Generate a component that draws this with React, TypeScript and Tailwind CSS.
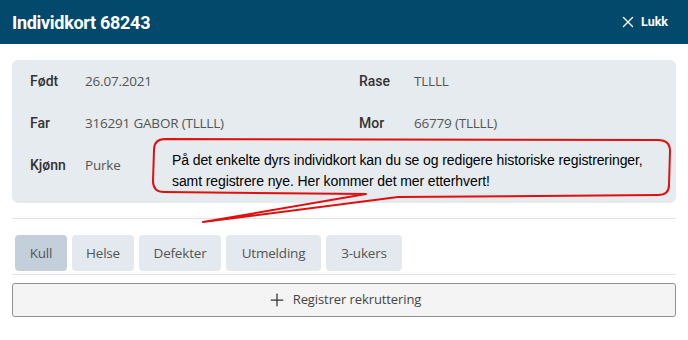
import { X, Plus } from "lucide-react";

const info = [
  [
    { label: "Født", value: "26.07.2021" },
    { label: "Rase", value: "TLLLL" },
  ],
  [
    { label: "Far", value: "316291 GABOR (TLLLL)" },
    { label: "Mor", value: "66779 (TLLLL)" },
  ],
  [{ label: "Kjønn", value: "Purke" }],
];

const tabs = [
  { name: "Kull", w: "w-[52px]" },
  { name: "Helse", w: "w-[62px]" },
  { name: "Defekter", w: "w-[82px]" },
  { name: "Utmelding", w: "w-[95px]" },
  { name: "3-ukers", w: "w-[76px]" },
];

export default function App() {
  return (
    <div className="relative w-[688px] h-[340px] bg-white overflow-hidden font-['Open_Sans',sans-serif]">
      {/* Topplinje */}
      <div className="h-[44px] bg-[#03496c] flex items-center justify-between pl-[12px] pr-[20px]">
        <h1 className="text-white text-[18px] font-bold tracking-[-0.3px] font-['Roboto',sans-serif]">
          Individkort 68243
        </h1>
        <button className="flex items-center gap-[4px] text-white text-[12.5px] font-bold font-['Roboto',sans-serif]">
          <X size={18} strokeWidth={1.8} />
          Lukk
        </button>
      </div>

      <div className="px-[12px]">
        {/* Info-kort */}
        <div className="mt-[16px] bg-[#e6ebef] rounded-[6px] pl-[18px] pb-[17px]">
          {info.map((row, i) => (
            <div key={i} className="grid grid-cols-[329px_1fr] h-[42px] items-center">
              {row.map((item) => (
                <div key={item.label} className="flex items-center">
                  <span className="w-[55px] text-[14px] font-medium text-[#333] font-['Roboto',sans-serif]">
                    {item.label}
                  </span>
                  <span className="text-[13.5px] tracking-[-0.2px] text-[#555]">{item.value}</span>
                </div>
              ))}
            </div>
          ))}
        </div>

        <div className="mt-[15px] h-px bg-[#e4e4e4]" />

        {/* Faner */}
        <div className="mt-[16px] flex gap-[5px] pl-[3px]">
          {tabs.map((t, i) => (
            <div
              key={t.name}
              className={`${t.w} h-[36px] flex items-center justify-center rounded-[4px] text-[13.5px] tracking-[-0.2px] text-[#555] ${
                i === 0 ? "bg-[#c3d0db]" : "bg-[#e3e9ee]"
              }`}
            >
              {t.name}
            </div>
          ))}
        </div>

        <div className="mt-[3px] h-px bg-[#e4e4e4]" />

        <button className="mt-[8px] w-full h-[34px] flex items-center justify-center gap-[6px] bg-[#f4f4f4] border border-[#8f8f8f] rounded-[3px] text-[13px] tracking-[-0.1px] text-[#444]">
          <Plus size={20} strokeWidth={1.5} className="text-[#333]" />
          Registrer rekruttering
        </button>
      </div>

      {/* Kommentarboble */}
      <svg className="absolute left-0 top-0 pointer-events-none" width="688" height="340">
        <path
          d="M165 139 L658 140 Q670 140 670 151 L669 185 Q669 195 658 195 L398 197 L203 222 L366 194 L164 192 Q153 192 153 181 L154 150 Q154 139 165 139 Z"
          fill="none"
          stroke="#e01010"
          strokeWidth="2"
          strokeLinejoin="round"
        />
      </svg>
      <div className="absolute left-[172px] top-[150px] text-[14px] leading-[21px] tracking-[-0.1px] text-black font-['Liberation_Sans',Arial,sans-serif]">
        På det enkelte dyrs individkort kan du se og redigere historiske registreringer,
        <br />
        samt registrere nye. Her kommer det mer etterhvert!
      </div>
    </div>
  );
}
